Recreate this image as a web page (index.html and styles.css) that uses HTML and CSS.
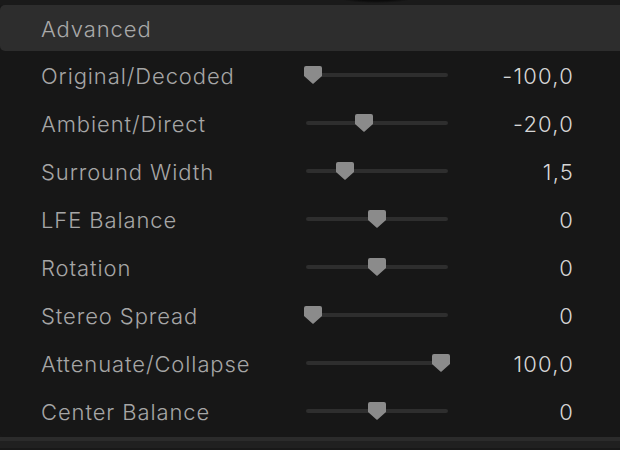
FILE: index.html
```html
<!DOCTYPE html>
<html lang="en">

<head>
    <meta charset="UTF-8">
    <title>Advanced</title>
    <link rel="stylesheet" href="styles.css">
</head>

<body>
    <div class="top"></div>
    <div class="panel">
        <div class="header">Advanced</div>

        <div class="row">
            <span class="label">Original/Decoded</span>
            <div class="track">
                <svg class="thumb" style="left: -2px" width="18" height="18" viewBox="0 0 18 18"><path d="M2 0H16Q18 0 18 2V10L9.6 17.4Q9 18 8.4 17.4L0 10V2Q0 0 2 0Z"/></svg>
            </div>
            <span class="value">-100,0</span>
        </div>
        <div class="row">
            <span class="label">Ambient/Direct</span>
            <div class="track">
                <svg class="thumb" style="left: 49px" width="18" height="18" viewBox="0 0 18 18"><path d="M2 0H16Q18 0 18 2V10L9.6 17.4Q9 18 8.4 17.4L0 10V2Q0 0 2 0Z"/></svg>
            </div>
            <span class="value">-20,0</span>
        </div>
        <div class="row">
            <span class="label">Surround Width</span>
            <div class="track">
                <svg class="thumb" style="left: 30px" width="18" height="18" viewBox="0 0 18 18"><path d="M2 0H16Q18 0 18 2V10L9.6 17.4Q9 18 8.4 17.4L0 10V2Q0 0 2 0Z"/></svg>
            </div>
            <span class="value">1,5</span>
        </div>
        <div class="row">
            <span class="label">LFE Balance</span>
            <div class="track">
                <svg class="thumb" style="left: 62px" width="18" height="18" viewBox="0 0 18 18"><path d="M2 0H16Q18 0 18 2V10L9.6 17.4Q9 18 8.4 17.4L0 10V2Q0 0 2 0Z"/></svg>
            </div>
            <span class="value">0</span>
        </div>
        <div class="row">
            <span class="label">Rotation</span>
            <div class="track">
                <svg class="thumb" style="left: 62px" width="18" height="18" viewBox="0 0 18 18"><path d="M2 0H16Q18 0 18 2V10L9.6 17.4Q9 18 8.4 17.4L0 10V2Q0 0 2 0Z"/></svg>
            </div>
            <span class="value">0</span>
        </div>
        <div class="row">
            <span class="label">Stereo Spread</span>
            <div class="track">
                <svg class="thumb" style="left: -2px" width="18" height="18" viewBox="0 0 18 18"><path d="M2 0H16Q18 0 18 2V10L9.6 17.4Q9 18 8.4 17.4L0 10V2Q0 0 2 0Z"/></svg>
            </div>
            <span class="value">0</span>
        </div>
        <div class="row">
            <span class="label">Attenuate/Collapse</span>
            <div class="track">
                <svg class="thumb" style="left: 126px" width="18" height="18" viewBox="0 0 18 18"><path d="M2 0H16Q18 0 18 2V10L9.6 17.4Q9 18 8.4 17.4L0 10V2Q0 0 2 0Z"/></svg>
            </div>
            <span class="value">100,0</span>
        </div>
        <div class="row">
            <span class="label">Center Balance</span>
            <div class="track">
                <svg class="thumb" style="left: 62px" width="18" height="18" viewBox="0 0 18 18"><path d="M2 0H16Q18 0 18 2V10L9.6 17.4Q9 18 8.4 17.4L0 10V2Q0 0 2 0Z"/></svg>
            </div>
            <span class="value">0</span>
        </div>
    </div>
    <div class="bottom"></div>
</body>

</html>
```

FILE: styles.css
```css
body {
    margin: 0;
    padding: 0;
    background-color: #181818;
    font-family: Inter, "Noto Sans", sans-serif;
    font-size: 22px;
    font-weight: 300;
    letter-spacing: 0.9px;
    overflow: hidden;
}

.top {
    position: relative;
    height: 5px;
    background-color: #1a1a1a;
}

/* dark knob shadow peeking in at the top */
.top::after {
    content: "";
    position: absolute;
    left: 340px;
    top: -6px;
    width: 72px;
    height: 9px;
    border-radius: 50%;
    background: radial-gradient(ellipse at center, #0c0c0c 40%, rgba(12, 12, 12, 0) 72%);
}

.panel {
    background-color: #171717;
    border-radius: 5px 0 0 5px;
    height: 432px;
}

.header {
    height: 46px;
    line-height: 48px;
    padding-left: 41px;
    background-color: #2d2d2d;
    border-radius: 5px 0 0 5px;
    color: #a9a9a9;
    margin-bottom: 1px;
}

.row {
    display: grid;
    grid-template-columns: 265px 142px 125px;
    align-items: center;
    height: 48px;
    padding-left: 41px;
}

.label {
    color: #a6a6a6;
}

.track {
    position: relative;
    height: 4px;
    border-radius: 2px;
    background-color: #2e2e2e;
    margin-top: -2px;
}

.thumb {
    position: absolute;
    top: -7px;
    fill: #8b8b8b;
}

.value {
    text-align: right;
    color: #d6d6d6;
    letter-spacing: 1.2px;
    margin-right: -1px;
}

.bottom {
    height: 4px;
    background-color: #2b2b2b;
    border-bottom: 7px solid #202020;
}
```
